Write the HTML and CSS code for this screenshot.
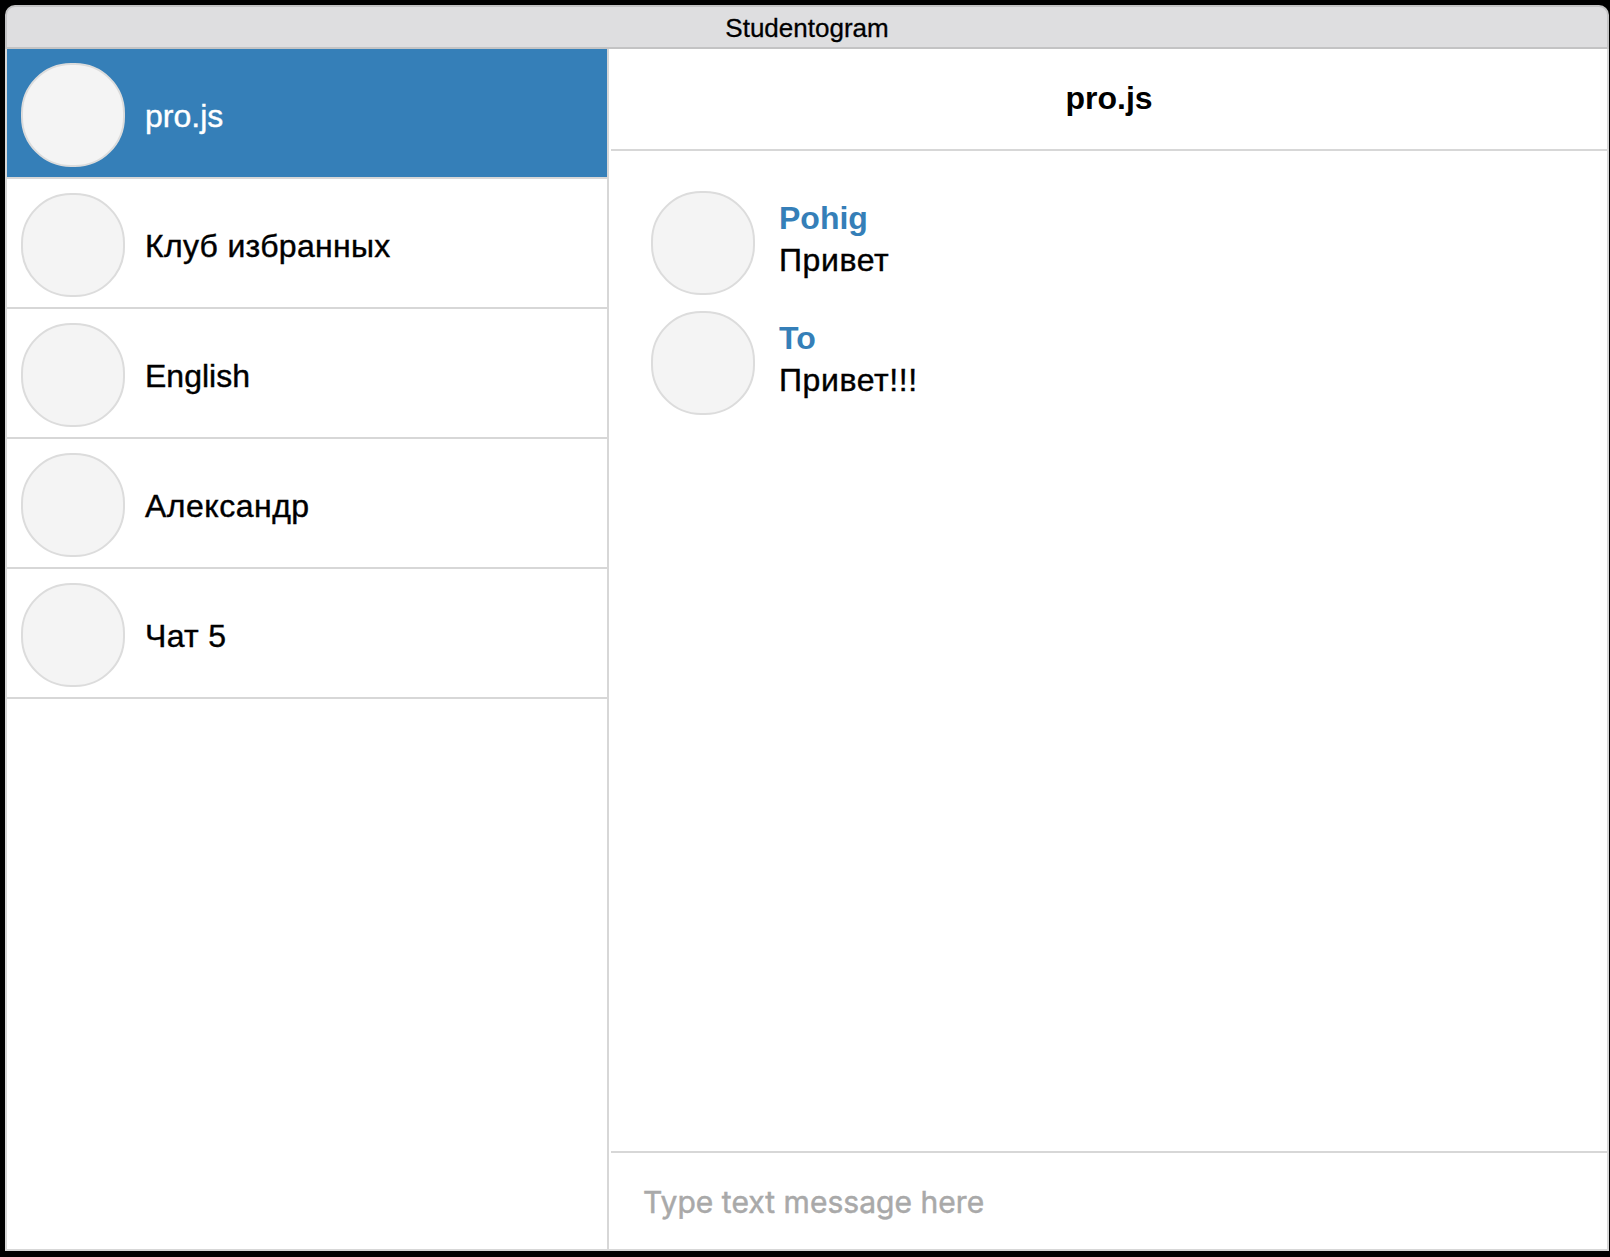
FILE: index.html
```
<!DOCTYPE html>
<html lang="ru">
<head>
<meta charset="utf-8">
<title>Studentogram</title>
<link rel="stylesheet" href="styles.css">
</head>
<body>
<div class="window">
  <header class="titlebar">Studentogram</header>
  <div class="content">
    <nav class="chats">
      <div class="chat chat-active"><span class="avatar"></span><span class="chat-name">pro.js</span></div>
      <div class="chat"><span class="avatar"></span><span class="chat-name name-long">Клуб избранных</span></div>
      <div class="chat"><span class="avatar"></span><span class="chat-name">English</span></div>
      <div class="chat"><span class="avatar"></span><span class="chat-name name-cyrillic">Александр</span></div>
      <div class="chat"><span class="avatar"></span><span class="chat-name name-long">Чат 5</span></div>
    </nav>
    <main class="dialog">
      <h1 class="dialog-title">pro.js</h1>
      <div class="messages">
        <div class="message">
          <span class="avatar"></span>
          <div class="message-body"><div class="author">Pohig</div><div class="text">Привет</div></div>
        </div>
        <div class="message">
          <span class="avatar"></span>
          <div class="message-body"><div class="author">To</div><div class="text">Привет!!!</div></div>
        </div>
      </div>
      <div class="composer"><span class="placeholder">Type text message here</span></div>
    </main>
  </div>
</div>
</body>
</html>
```
FILE: styles.css
```
* { box-sizing: border-box; }

body {
  margin: 0;
  height: 1257px;
  padding: 5px 1px 6px 5px;
  background: #000;
  color: #000;
  font: 32px/36px "Liberation Sans", Arial, sans-serif;
  overflow: hidden;
}

.window {
  display: flex;
  flex-direction: column;
  height: 1246px;
}

.titlebar {
  height: 44px;
  border: 2px solid #c3c3c4;
  border-radius: 10px 10px 0 0;
  background: #dedee0;
  font-size: 26px;
  line-height: 42px;
  text-align: center;
  -webkit-text-stroke: 0.3px;
}

.content {
  flex: 1;
  display: flex;
  border: 2px solid #d7d7d7;
  border-top: 0;
  background: #fff;
}

.chats {
  width: 602px;
  border-right: 2px solid #d7d7d7;
}

.chat {
  display: flex;
  align-items: center;
  gap: 20px;
  height: 130px;
  padding: 4px 14px 0;
  border-bottom: 2px solid #d7d7d7;
}

.chat-active {
  background: #357fb8;
  background-clip: padding-box;
  color: #fff;
}

.chat-name {
  padding-top: 2px;
  -webkit-text-stroke: 0.4px;
}

.name-long { letter-spacing: 0.3px; }

.name-cyrillic { letter-spacing: 0.5px; }

.avatar {
  flex: none;
  width: 104px;
  height: 104px;
  border: 2px solid #dcdcdc;
  border-radius: 50px;
  background: #f4f4f4;
}

.dialog {
  flex: 1;
  display: flex;
  flex-direction: column;
  margin-left: 2px;
}

.dialog-title {
  height: 102px;
  margin: 0;
  padding-top: 31px;
  border-bottom: 2px solid #d7d7d7;
  font-size: 32px;
  line-height: 36px;
  text-align: center;
}

.messages {
  flex: 1;
  display: flex;
  flex-direction: column;
  gap: 16px;
  padding: 40px;
}

.message {
  display: flex;
  gap: 24px;
}

.message-body {
  padding-top: 6px;
  line-height: 42px;
}

.author {
  color: #357fb8;
  font-weight: bold;
}

.text {
  letter-spacing: 0.6px;
  -webkit-text-stroke: 0.4px;
}

.composer {
  height: 98px;
  padding: 31px 32px 0;
  border-top: 2px solid #d7d7d7;
}

.placeholder {
  color: #a9a9a9;
  font-family: Inter, Roboto, sans-serif;
  font-size: 30px;
  letter-spacing: 0.04px;
  -webkit-text-stroke: 0.5px;
}
```
